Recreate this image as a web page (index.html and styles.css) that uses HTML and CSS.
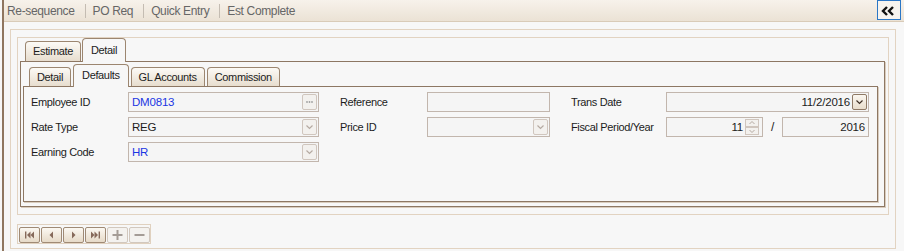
FILE: index.html
```html
<html>
<head>
  <link rel="stylesheet" href="styles.css">
</head>
<body>
  <div class="frame">
    <div class="toolbar">
      <span class="tool">Re-sequence</span>
      <span class="sep"></span>
      <span class="tool">PO Req</span>
      <span class="sep"></span>
      <span class="tool">Quick Entry</span>
      <span class="sep"></span>
      <span class="tool">Est Complete</span>
      <div class="collapse">
        <svg width="22" height="18" viewBox="0 0 22 18">
          <polyline points="9,6 5,10 9,14" fill="none" stroke="#111" stroke-width="2.4"/>
          <polyline points="15,6 11,10 15,14" fill="none" stroke="#111" stroke-width="2.4"/>
        </svg>
      </div>
    </div>

    <div class="content">
      <div class="box-a">
        <div class="box-b">
          <div class="tabs outer-tabs">
            <div class="tab">Estimate</div>
            <div class="tab active">Detail</div>
          </div>
          <div class="panel outer-panel">
            <div class="tabs inner-tabs">
              <div class="tab">Detail</div>
              <div class="tab active">Defaults</div>
              <div class="tab">GL Accounts</div>
              <div class="tab">Commission</div>
            </div>
            <div class="panel inner-panel">
              <div class="form">
                <div class="label">Employee ID</div>
                <div class="field"><span class="val blue">DM0813</span>
                  <div class="btn">
                    <svg width="13" height="14" viewBox="0 0 13 14">
                      <circle cx="4" cy="7" r="0.9" fill="#a0a0a0"/>
                      <circle cx="6.5" cy="7" r="0.9" fill="#a0a0a0"/>
                      <circle cx="9" cy="7" r="0.9" fill="#a0a0a0"/>
                    </svg>
                  </div>
                </div>
                <div class="label pad">Reference</div>
                <div class="field"></div>
                <div class="label pad">Trans Date</div>
                <div class="field right"><span class="val">11/2/2016</span>
                  <div class="btn on">
                    <svg width="13" height="14" viewBox="0 0 13 14">
                      <polyline points="3.5,5.5 6.5,8.5 9.5,5.5" fill="none" stroke="#3e3026" stroke-width="1.2"/>
                    </svg>
                  </div>
                </div>

                <div class="label">Rate Type</div>
                <div class="field"><span class="val">REG</span>
                  <div class="btn">
                    <svg width="13" height="14" viewBox="0 0 13 14">
                      <polyline points="3.5,5.5 6.5,8.5 9.5,5.5" fill="none" stroke="#b5aaa2" stroke-width="1.2"/>
                    </svg>
                  </div>
                </div>
                <div class="label pad">Price ID</div>
                <div class="field">
                  <div class="btn">
                    <svg width="13" height="14" viewBox="0 0 13 14">
                      <polyline points="3.5,5.5 6.5,8.5 9.5,5.5" fill="none" stroke="#b5aaa2" stroke-width="1.2"/>
                    </svg>
                  </div>
                </div>
                <div class="label pad">Fiscal Period/Year</div>
                <div class="fiscal">
                  <div class="field right period"><span class="val">11</span>
                    <div class="spin">
                      <div class="spin-half">
                        <svg width="12" height="6" viewBox="0 0 12 6"><polyline points="3.5,4 6,1.5 8.5,4" fill="none" stroke="#b5aaa2" stroke-width="1"/></svg>
                      </div>
                      <div class="spin-half">
                        <svg width="12" height="6" viewBox="0 0 12 6"><polyline points="3.5,2 6,4.5 8.5,2" fill="none" stroke="#b5aaa2" stroke-width="1"/></svg>
                      </div>
                    </div>
                  </div>
                  <span class="slash">/</span>
                  <div class="field right year"><span class="val">2016</span></div>
                </div>

                <div class="label">Earning Code</div>
                <div class="field"><span class="val blue">HR</span>
                  <div class="btn">
                    <svg width="13" height="14" viewBox="0 0 13 14">
                      <polyline points="3.5,5.5 6.5,8.5 9.5,5.5" fill="none" stroke="#b5aaa2" stroke-width="1.2"/>
                    </svg>
                  </div>
                </div>
              </div>
            </div>
          </div>
        </div>

        <div class="nav">
          <div class="nb">
            <svg width="19" height="14" viewBox="0 0 19 14">
              <rect x="5" y="3.5" width="1.4" height="7" fill="#86695a"/>
              <polygon points="10.5,3.5 7,7 10.5,10.5" fill="#86695a"/>
              <polygon points="14,3.5 10.5,7 14,10.5" fill="#86695a"/>
            </svg>
          </div>
          <div class="nb">
            <svg width="19" height="14" viewBox="0 0 19 14">
              <polygon points="11,3.5 7.5,7 11,10.5" fill="#86695a"/>
            </svg>
          </div>
          <div class="nb">
            <svg width="19" height="14" viewBox="0 0 19 14">
              <polygon points="8,3.5 11.5,7 8,10.5" fill="#86695a"/>
            </svg>
          </div>
          <div class="nb">
            <svg width="19" height="14" viewBox="0 0 19 14">
              <polygon points="5,3.5 8.5,7 5,10.5" fill="#86695a"/>
              <polygon points="8.5,3.5 12,7 8.5,10.5" fill="#86695a"/>
              <rect x="12.6" y="3.5" width="1.4" height="7" fill="#86695a"/>
            </svg>
          </div>
          <div class="nb off">
            <svg width="19" height="14" viewBox="0 0 19 14">
              <path d="M4.5 7 H14.5 M9.5 2 V12" stroke="#a49c96" stroke-width="2"/>
            </svg>
          </div>
          <div class="nb off">
            <svg width="19" height="14" viewBox="0 0 19 14">
              <path d="M4.5 7 H14.5" stroke="#a49c96" stroke-width="2"/>
            </svg>
          </div>
        </div>
      </div>
    </div>
  </div>
</body>
</html>
```

FILE: styles.css
```css
* {
    box-sizing: border-box;
    margin: 0;
    padding: 0;
}

body {
    background-color: #f7f7f7;
    font-family: "Liberation Sans", Arial, sans-serif;
    font-size: 11px;
    letter-spacing: -0.35px;
    color: #1c1c1c;
    overflow: hidden;
}

.frame {
    margin-left: 2px;
    border-left: 2px solid #8f7660;
    height: 251px;
}

/* barra de ferramentas */
.toolbar {
    height: 22px;
    display: flex;
    align-items: center;
    padding-left: 3px;
    background: linear-gradient(#f7f2eb, #ebe2d5);
    border-bottom: 1px solid #d9cbb8;
    font-size: 12px;
    color: #666666;
}

.sep {
    width: 1px;
    height: 14px;
    margin: 0 7px 0 10px;
    background-color: #c4bcb2;
}

.collapse {
    align-self: flex-start;
    margin-left: auto;
    margin-right: 3px;
    width: 24px;
    height: 20px;
    border: 1px solid #2b77c6;
    background-color: #f7f4ef;
}

.collapse svg {
    display: block;
}

/* caixas */
.content {
    padding: 7px 8px 0 6px;
}

.box-a {
    border: 1px solid #e2d3c1;
    padding: 7px 6px 4px 6px;
}

.box-b {
    border: 1px solid #e2d3c1;
    padding: 0 3px 7px 2px;
}

/* abas */
.tabs {
    display: flex;
    align-items: flex-end;
}

.outer-tabs {
    height: 23px;
    padding-left: 5px;
}

.inner-tabs {
    height: 22px;
    padding-left: 6px;
}

.tab {
    height: 20px;
    line-height: 19px;
    padding: 0 7px;
    margin-right: 1px;
    border: 1px solid #9c8670;
    border-bottom: 0;
    border-radius: 4px 4px 0 0;
    background: linear-gradient(#fcfaf6, #e7ddce);
    color: #1c1c1c;
}

.inner-tabs .tab {
    height: 19px;
    line-height: 18px;
    margin-right: 2px;
}

.tab.active {
    position: relative;
    z-index: 1;
    height: 24px;
    line-height: 22px;
    margin-bottom: -1px;
    padding: 0 8px;
    background: #f7f7f7;
}

.inner-tabs .tab.active {
    height: 23px;
    line-height: 21px;
}

.panel {
    border: 1px solid #8d7763;
    box-shadow: 1px 1px 0 #d9ccbd;
}

.outer-panel {
    padding: 2px 6px 4px 2px;
}

.inner-panel {
    height: 116px;
    padding: 5px 0 0 6px;
}

/* formulario */
.form {
    display: grid;
    grid-template-columns: 98px 191px 108px 123px 116px 203px;
    grid-auto-rows: 20px;
    row-gap: 5px;
}

.label {
    display: flex;
    align-items: center;
    padding-left: 1px;
}

.label.pad {
    padding-left: 21px;
}

.field {
    display: flex;
    align-items: center;
    height: 20px;
    border: 1px solid #c2b6ad;
    background-color: #f5f5f5;
    padding: 0 1px 0 3px;
}

.val {
    font-size: 11.5px;
    letter-spacing: -0.2px;
}

.blue {
    color: #1b36e3;
}

.field .btn {
    margin-left: auto;
}

.field.right .val {
    margin-left: auto;
    margin-right: 2px;
}

.field.right .btn,
.field.right .spin {
    margin-left: 0;
}

.btn {
    width: 15px;
    height: 16px;
    border: 1px solid #d0c6be;
    border-radius: 2px;
    background-color: #f3f1ee;
}

.btn.on {
    border-color: #8f7a66;
    background: linear-gradient(#fbf7f0, #e8ddcc);
}

.btn svg,
.nb svg,
.spin-half svg {
    display: block;
}

.fiscal {
    display: flex;
    align-items: center;
}

.period {
    width: 97px;
}

.year {
    width: 87px;
    padding-right: 1px;
}

.slash {
    flex: 1;
    text-align: center;
    font-size: 12px;
}

.spin {
    width: 14px;
    height: 16px;
    display: flex;
    flex-direction: column;
    margin-right: 2px;
}

.spin-half {
    height: 8px;
    border: 1px solid #d0c6be;
    background-color: #f3f1ee;
}

/* navegacao */
.nav {
    display: inline-flex;
    gap: 1px;
    margin-top: 9px;
    height: 20px;
    padding: 2px 0 0 1px;
    border: 1px solid #e0d1bf;
}

.nb {
    width: 21px;
    height: 16px;
    border: 1px solid #9f8a75;
    border-radius: 2px;
    background: linear-gradient(#fbf8f2, #e6dac8);
}

.nb.off {
    border-color: #d2c8be;
    background: #f4f2ef;
}
```
